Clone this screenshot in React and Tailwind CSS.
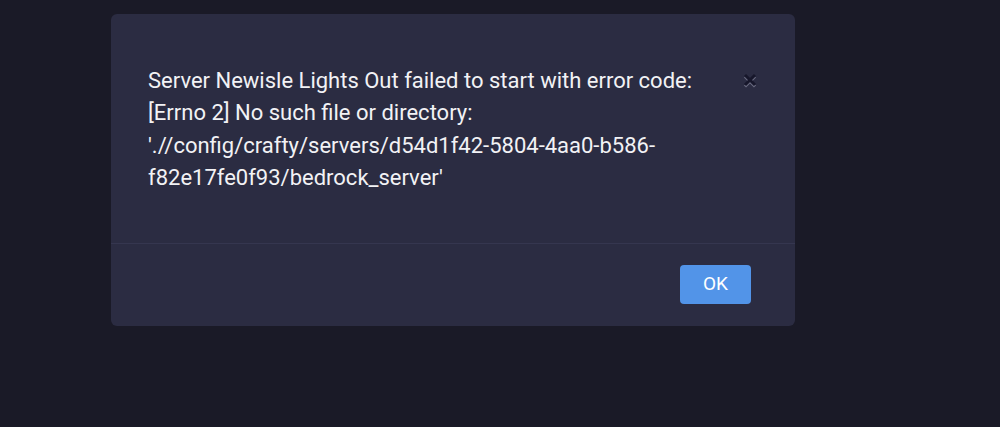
export default function App() {
  return (
    <div className="min-h-[427px] w-full bg-[#1a1a27] pt-[14px] font-['Roboto','Liberation_Sans',sans-serif]">
      <div className="ml-[111px] w-[684px] rounded-md bg-[#2b2c42]">
        {/* Body */}
        <div className="flex items-start pl-[37px] pr-[38px] pt-[51px] pb-[48px]">
          <p className="w-[556px] text-[22px] leading-[32.4px] text-[#f2f2f5]">
            Server Newisle Lights Out failed to start with error code: [Errno 2] No such file or directory: './/config/crafty/servers/d54d1f42-5804-4aa0-b586-f82e17fe0f93/bedrock_server'
          </p>
          <div className="flex-1" />
          <button className="mt-[8px] h-[15px] w-[14px]" aria-label="Close">
            <svg width="14" height="15" viewBox="0 0 14 15" className="overflow-visible">
              <path d="M2 2 L12 12 M12 2 L2 12" stroke="#6a6b80" strokeWidth="3" transform="translate(0 1.5)" />
              <path d="M2 2 L12 12 M12 2 L2 12" stroke="#17172b" strokeWidth="3" />
            </svg>
          </button>
        </div>
        {/* Footer */}
        <div className="flex justify-end border-t border-[#35364f] px-[44px] pt-[21px] pb-[22px]">
          <button className="h-[39px] w-[71px] rounded-[4px] bg-[#5294e8] text-[19px] text-white">
            OK
          </button>
        </div>
      </div>
    </div>
  );
}
